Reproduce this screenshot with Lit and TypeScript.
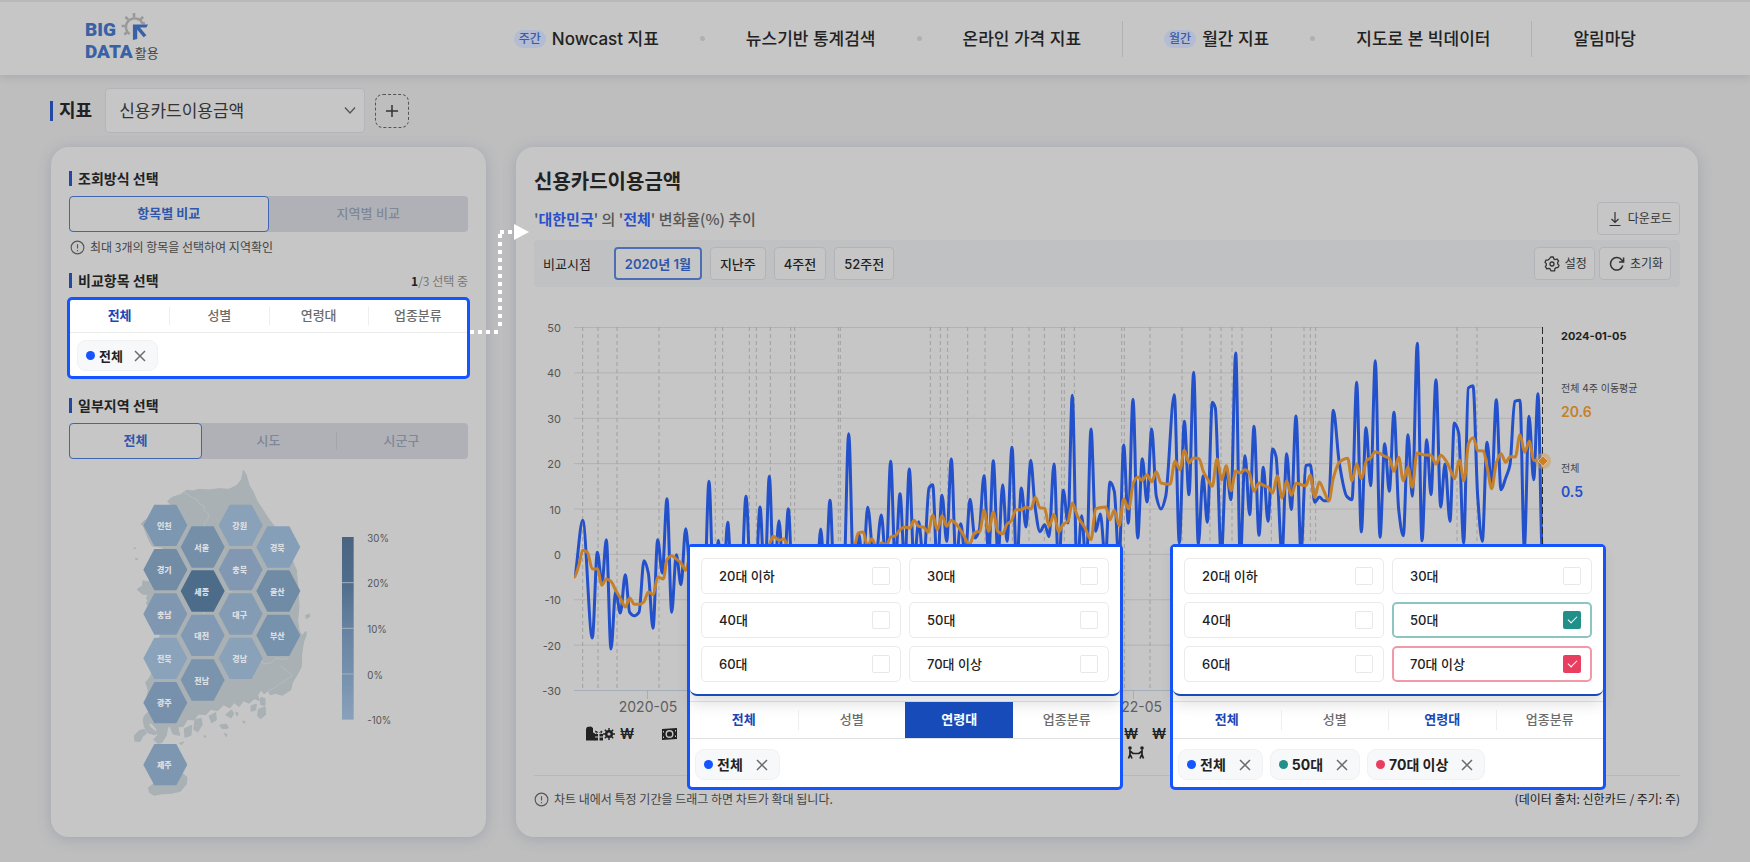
import { LitElement, html, svg, css, nothing } from "lit";
import { customElement, property, state } from "lit/decorators.js";
import { classMap } from "lit/directives/class-map.js";
import { styleMap } from "lit/directives/style-map.js";

type Point = [number, number];

const BLUE = "#1455ff";
const TEAL = "#219089";
const RED = "#e83e5f";

/* Series are stored at triple density: x from the plot's left edge, y from the +50 grid line. */
const at = (dx: number, flat: number[]): Point[] => {
  const out: Point[] = [];
  for (let i = 0; i < flat.length; i += 2) out.push([(flat[i] + dx) / 3, (flat[i + 1] - 52) / 3]);
  return out;
};

const WEEKLY: Point[] = [
  ...at(-132, [
    132, 800, 158, 632, 187, 985, 202, 728, 216, 822, 229, 690, 243, 1018, 257, 845, 271, 910, 286, 795, 299, 908,
    313, 918, 327, 908, 342, 753, 355, 790, 369, 956, 383, 690, 397, 790, 411, 567, 425, 908, 439, 735, 453, 825,
    467, 657, 481, 800, 509, 900, 523, 860, 537, 515, 551, 860, 565, 692, 579, 850, 593, 638, 607, 850, 632, 860,
    648, 560, 664, 850, 676, 840, 690, 592, 704, 830, 718, 500, 732, 820, 747, 633, 761, 820, 775, 597, 789, 850,
    858, 860, 872, 658, 886, 830, 900, 572, 914, 850, 940, 850, 956, 372, 972, 830, 987, 675, 999, 780, 1013, 593,
    1034, 780,
  ]),
  ...at(858, [
    64, 616, 78, 760, 92, 455, 106, 770, 120, 552, 134, 770, 148, 478, 162, 760, 176, 636, 191, 760, 207, 535,
    218, 525, 232, 780, 246, 557, 260, 695, 274, 448, 288, 760, 302, 642, 316, 740, 330, 569, 345, 685, 358, 660,
    372, 498, 386, 740, 400, 453, 414, 740, 428, 525, 441, 695, 456, 413, 470, 780, 484, 535, 498, 652, 512, 452,
    525, 590, 540, 666, 554, 645, 567, 681, 582, 463, 596, 780, 610, 542, 624, 640, 637, 257, 651, 780, 665, 618,
    679, 780, 693, 358, 707, 665, 721, 613, 736, 750, 750, 517, 763, 545, 777, 760, 791, 406, 805, 641, 819, 269,
    833, 685, 847, 447, 861, 577, 875, 358, 889, 560, 903, 598, 917, 560, 943, 255, 958, 700, 973, 335, 987, 555,
  ]),
  ...at(1848, [
    11, 188, 25, 705, 39, 498, 52, 638, 67, 278, 76, 295, 94, 740, 108, 470, 123, 570, 137, 130, 151, 750, 165, 438,
    179, 615, 192, 350, 207, 677, 220, 473, 234, 635, 248, 418, 258, 440, 276, 735, 290, 432, 304, 600, 318, 319,
    333, 730, 347, 468, 361, 465, 374, 578, 388, 562, 402, 573, 416, 573, 430, 302, 448, 460, 470, 560, 486, 570,
    500, 218, 514, 667, 528, 354, 542, 528, 556, 153, 570, 683, 584, 402, 598, 545, 612, 308, 626, 600, 640, 678,
    654, 375, 667, 560, 682, 101, 696, 693, 710, 390, 723, 555, 738, 210, 752, 592, 765, 463, 780, 635, 793, 340,
    806, 370, 821, 700, 835, 235, 849, 228, 863, 560, 877, 695, 891, 398, 905, 530, 919, 270, 933, 540, 947, 505,
    960, 465, 974, 275, 990, 272, 1003, 715, 1017, 320, 1031, 510, 1044, 252, 1057, 730,
  ]),
];

const AVERAGE: Point[] = [
  ...at(-132, [
    132, 803, 147, 765, 158, 722, 172, 728, 187, 778, 203, 778, 215, 827, 229, 808, 243, 815, 257, 842, 271, 865,
    286, 892, 299, 865, 313, 884, 330, 884, 342, 876, 355, 847, 370, 855, 383, 802, 400, 808, 411, 750, 425, 738,
    439, 748, 453, 760, 467, 782, 481, 740, 500, 760, 600, 770, 700, 740, 718, 705, 730, 680, 747, 692, 762, 688,
    775, 715, 860, 760, 960, 740, 975, 705, 985, 670,
  ]),
  ...at(858, [
    10, 667, 22, 710, 36, 687, 50, 715, 64, 700, 80, 705, 92, 682, 106, 678, 120, 660, 134, 652, 150, 655, 162, 632,
    176, 650, 190, 652, 205, 668, 218, 615, 232, 660, 246, 618, 260, 650, 274, 632, 290, 645, 310, 675, 328, 705,
    345, 668, 360, 665, 372, 602, 386, 665, 400, 607, 413, 665, 428, 672, 441, 643, 454, 634, 468, 600, 484, 601,
    498, 592, 513, 598, 526, 563, 540, 594, 554, 596, 567, 650, 582, 614, 596, 667, 610, 643, 624, 635, 637, 580,
    652, 618, 675, 655, 693, 690, 707, 597, 737, 592, 750, 630, 763, 602, 778, 648, 791, 568, 806, 598, 820, 520,
    833, 502, 847, 512, 861, 495, 875, 516, 889, 486, 903, 520, 930, 524, 945, 455, 960, 480, 973, 422, 987, 460,
  ]),
  ...at(1848, [
    10, 445, 27, 447, 40, 485, 55, 512, 67, 530, 81, 448, 95, 510, 109, 468, 123, 543, 137, 484, 150, 490, 165, 480,
    178, 490, 192, 545, 207, 520, 220, 527, 235, 533, 248, 550, 262, 498, 276, 565, 290, 514, 304, 557, 318, 521,
    347, 528, 361, 497, 374, 563, 388, 517, 402, 545, 417, 573, 430, 505, 448, 458, 473, 446, 486, 514, 500, 462,
    514, 507, 530, 452, 542, 445, 556, 426, 584, 440, 598, 446, 612, 485, 626, 443, 640, 513, 654, 472, 667, 533,
    681, 430, 700, 435, 723, 437, 738, 463, 752, 437, 766, 450, 780, 478, 794, 507, 808, 451, 822, 513, 836, 400,
    850, 384, 863, 423, 880, 424, 892, 475, 905, 537, 919, 460, 933, 432, 947, 458, 960, 441, 976, 442, 990, 375,
    1004, 428, 1018, 395, 1031, 452, 1057, 455,
  ]),
];

const EVENTS = [
  26, 72, 129, 255, 424, 446, 526, 547, 589, 650, 662, 793, 799, 1069, 1099, 1121, 1181, 1233, 1315, 1365, 1411, 1463,
  1471, 1501, 1643, 1651, 1728, 1824, 1908, 1941, 1974, 2004, 2092, 2190, 2209, 2225, 2649, 2709,
].map((x) => x / 3);

/* Monotone cubic interpolation, so peaks never overshoot their samples. */
const smooth = (pts: Point[]): string => {
  const slope = pts.map((p, i) => {
    if (i === 0 || i === pts.length - 1) return 0;
    const a = (p[1] - pts[i - 1][1]) / (p[0] - pts[i - 1][0]);
    const b = (pts[i + 1][1] - p[1]) / (pts[i + 1][0] - p[0]);
    return a * b <= 0 ? 0 : (2 * a * b) / (a + b);
  });
  let d = `M${pts[0][0].toFixed(1)} ${pts[0][1].toFixed(1)}`;
  for (let i = 1; i < pts.length; i++) {
    const [x0, y0] = pts[i - 1];
    const [x1, y1] = pts[i];
    const h = (x1 - x0) / 3;
    d += `C${[x0 + h, y0 + slope[i - 1] * h, x1 - h, y1 - slope[i] * h, x1, y1].map((v) => v.toFixed(1)).join(" ")}`;
  }
  return d;
};

const infoIcon = html`<svg class="info" viewBox="0 0 16 16" aria-hidden="true">
  <circle cx="8" cy="8" r="6.8" fill="none" stroke="#555" stroke-width="1.2" />
  <path d="M8 4.4v4.6M8 10.6v1.3" stroke="#555" stroke-width="1.2" />
</svg>`;

const TABS = ["전체", "성별", "연령대", "업종분류"];

interface Chip {
  name: string;
  color: string;
}

@customElement("item-tabs")
class ItemTabs extends LitElement {
  @property({ type: Array }) lit: string[] = [];
  @property() filled = "";

  static styles = css`
    :host { display: block; }
    .tabs { display: grid; grid-template-columns: repeat(4, 1fr); height: 100%; }
    .tab {
      position: relative; border: 0; padding: 0 0 2px; background: none; cursor: pointer;
      font: 500 13px/20px Inter, "Noto Sans CJK KR", sans-serif; color: #6c6c6c;
    }
    .tab + .tab { border-left: 1px solid transparent; border-image: linear-gradient(transparent 25%, #eee 25% 75%, transparent 75%) 1; }
    .tab.lit { color: #1c46b4; font-weight: 700; }
    .tab.filled { color: #fff; background: #174bb9; font-weight: 700; border-image: none; border-color: #174bb9; }
    .tab.filled + .tab { border-image: none; }
  `;

  render() {
    return html`<div class="tabs" role="tablist">
      ${TABS.map(
        (t) => html`<button
          role="tab"
          class=${classMap({ tab: true, lit: this.lit.includes(t), filled: this.filled === t })}
        >${t}</button>`
      )}
    </div>`;
  }
}

@customElement("chip-list")
class ChipList extends LitElement {
  @property({ type: Array }) chips: Chip[] = [];

  static styles = css`
    :host { display: flex; gap: 7px; }
    .chip {
      display: flex; align-items: center; box-sizing: border-box; height: 31px; padding: 0 11px 0 8px;
      border: 1px solid #f0f1f3; border-radius: 9px; background: #f7f8fa;
      font: 700 13px/20px Inter, "Noto Sans CJK KR", sans-serif; color: #222;
    }
    :host([large]) .chip { font-size: 14px; }
    .dot { width: 9px; height: 9px; margin-right: 4px; border-radius: 50%; }
    .remove { display: flex; margin-left: 11px; padding: 0; border: 0; background: none; cursor: pointer; }
    :host([large]) .remove { margin-left: 13px; }
    .remove svg { width: 12px; height: 12px; }
  `;

  render() {
    return this.chips.map(
      (c) => html`<div class="chip">
        <span class="dot" style=${styleMap({ background: c.color })}></span>${c.name}
        <button class="remove" aria-label="${c.name} 삭제">
          <svg viewBox="0 0 12 12"><path d="M1 1l10 10M11 1L1 11" stroke="#6c6c6c" stroke-width="1.5" /></svg>
        </button>
      </div>`
    );
  }
}

@customElement("age-popup")
class AgePopup extends LitElement {
  @property({ type: Object }) checked: Record<string, string> = {};
  @property({ type: Array }) lit: string[] = [];
  @property() filled = "";
  @property({ type: Array }) chips: Chip[] = [];

  static styles = css`
    :host {
      display: block; box-sizing: border-box; border: 3px solid #1455ff; border-radius: 5px; background: #fff;
      font-family: Inter, "Noto Sans CJK KR", sans-serif;
    }
    .panel {
      position: relative; display: grid; grid-template-columns: 1fr 1fr; gap: 8px; padding: 11px 11px 12px;
      border-bottom: 2px solid #174bb9; border-radius: 0 0 7px 7px; background: #fff;
      box-shadow: 0 8px 14px rgba(60, 60, 60, 0.16);
    }
    .option {
      display: flex; align-items: center; justify-content: space-between; box-sizing: border-box; height: 36px;
      padding: 0 10px 1px 17px; border: 1px solid #ebebeb; border-radius: 5px; font-size: 13px; line-height: 20px;
      font-weight: 500; color: #222; cursor: pointer;
    }
    .option.teal { border: 2px solid #8cc5c1; padding: 0 9px 1px 16px; }
    .option.red { border: 2px solid #f198a9; padding: 0 9px 1px 16px; }
    .box {
      appearance: none; box-sizing: border-box; width: 18px; height: 18px; margin: 0; border: 1px solid #e8e8e8;
      border-radius: 2px; background: #fff; display: grid; place-items: center;
    }
    .box:checked { border: 0; }
    .teal .box { background: #219089; }
    .red .box { background: #e83e5f; }
    .box:checked::before {
      content: ""; width: 9px; height: 5px; margin-bottom: 3px; border: solid #fff; border-width: 0 0 1px 1px;
      box-sizing: border-box; transform: rotate(-45deg);
    }
    .tabs { height: 36px; margin-top: 5px; border-top: 1px solid #e5e5e5; border-bottom: 1px solid #e2e2e2; }
    .chips { padding: 10px 5px 7px; }
  `;

  render() {
    return html`<div class="panel">
        ${["20대 이하", "30대", "40대", "50대", "60대", "70대 이상"].map((name) => {
          const tone = this.checked[name];
          return html`<label class=${classMap({ option: true, teal: tone === TEAL, red: tone === RED })}>
            ${name}<input class="box" type="checkbox" .checked=${Boolean(tone)} />
          </label>`;
        })}
      </div>
      <item-tabs class="tabs" .lit=${this.lit} .filled=${this.filled}></item-tabs>
      <chip-list large class="chips" .chips=${this.chips}></chip-list>`;
  }
}

@customElement("region-map")
class RegionMap extends LitElement {
  static styles = css`
    :host { display: block; }
    svg { display: block; width: 100%; }
    text { font-family: Inter, "Noto Sans CJK KR", sans-serif; }
    .name { font-size: 24px; font-weight: 900; fill: #dcdfe2; text-anchor: middle; }
    .scale { font-size: 29px; fill: #555; }
  `;

  private regions: [string, number, number, string][] = [
    ["인천", 169, 196, "#7d97b1"], ["경기", 169, 329, "#728ca6"], ["충남", 169, 462, "#8097b1"],
    ["전북", 169, 595, "#8aa2ba"], ["광주", 169, 728, "#7791ac"], ["제주", 169, 914, "#7d97b0"],
    ["서울", 281, 261, "#758fa8"], ["세종", 281, 393, "#4d6c8a"], ["대전", 281, 526, "#8199b2"],
    ["전남", 281, 660, "#7b94ae"], ["강원", 395, 196, "#89a1b9"], ["충북", 395, 329, "#8297b2"],
    ["대구", 395, 462, "#849bb4"], ["경남", 395, 595, "#89a2ba"], ["경북", 508, 261, "#869fb8"],
    ["울산", 508, 393, "#6f8ba6"], ["부산", 508, 526, "#7692ac"],
  ];

  render() {
    return html`<svg viewBox="0 0 960 1050" role="img" aria-label="지역별 변화율 지도">
      <defs>
        <linearGradient id="ramp" x2="0" y2="1">
          <stop offset="0" stop-color="#4a6381" /><stop offset=".25" stop-color="#4f6e8c" />
          <stop offset=".5" stop-color="#6782a0" /><stop offset=".75" stop-color="#7591ad" />
          <stop offset="1" stop-color="#8aa1bb" />
        </linearGradient>
      </defs>
      <g fill="#a9b1b5" stroke="#a9b1b5" stroke-width="3" stroke-linejoin="round">
        <path d="M403 31L412 45 420 75 432 95 445 125 462 150 480 178 497 200 520 240 545 290 562 330 568 400 570 440 566 480 570 510 578 528 590 514 592 524 584 545 578 580 577 620 564 645 550 668 545 690 520 706 500 700 484 704 476 692 466 702 456 690 446 706 452 722 436 716 420 730 404 722 390 740 376 728 362 744 344 734 326 752 306 748 290 764 268 762 256 780 236 778 222 800 206 800 212 826 192 822 184 800 176 800 172 826 158 848 146 850 134 838 146 826 142 806 128 790 112 790 104 770 122 752 112 720 118 690 110 668 124 650 134 625 120 600 130 560 150 535 160 510 140 480 128 450 112 430 124 405 100 402 84 388 100 378 102 362 118 366 130 350 150 330 170 280 160 262 130 258 118 236 104 200 98 190 110 180 150 150 186 134 176 124 190 112 214 104 234 90 250 93 270 88 300 90 330 86 360 88 384 76 398 58z" />
        <path d="M118 984l14-12 30-8 42-12 16-12 14 12-2 20-18 22-28 6-32 2-18 4-14-8z" />
        <path d="M76 828l14-16 16-4 6 12-12 10-6 14-16 0zM102 776l10 4 12 22 22 18-10 4-20-6-10-18zM590 466l12-4 0 8-10 6zM96 192l12-12 0 20zM78 296l8 0-2 4zM74 264l6 0 0 2zM120 402l-8 12 8 12zM226 806l22-10-2 30-18 6zM258 780l18-6 4 20-14 22-12-8zM300 768l20-10 2 22-14 8zM332 796l20-4 6 12-18 2zM350 764l18-14 6 12-8 12zM400 784l8 0-2 6zM380 756l8 4-4 8zM448 748l20-8 2 24-16 12-8-8zM426 738l16-6-2 18-14 4zM284 828l6 0 0 4zM212 850l12-4-6 8zM346 820l8 4-2 6zM456 712l12 4 0 20-14-2z" />
      </g>
      <path d="M224 96l18 12 24 12 6 12 12 6 2 14 14 12-4 16-10 8v20M452 604l16 8 20-4 12-14 22 4 16-4M516 618l20 16 14 12-20 16-20 10-14 12-20 10M282 460l6 0M350 394l20 2" fill="none" stroke="#b5bcc0" stroke-width="3" />
      ${this.regions.map(
        ([name, x, y, fill]) => svg`
          <path d="M${x - 66} ${y}l33-62h66l33 62-33 62h-66z" fill=${fill} />
          <text class="name" x=${x - 3} y=${y + 11}>${name}</text>`
      )}
      <rect x="699" y="231" width="35" height="548" fill="url(#ramp)" />
      ${["30%", "20%", "10%", "0%", "-10%"].map(
        (label, i) => svg`
          ${i > 0 && i < 4 ? svg`<path d="M699 ${231 + i * 137}h35" stroke="#a4b0bd" stroke-width="3" />` : nothing}
          <text class="scale" x="775" y=${245 + i * 137}>${label}</text>`
      )}
    </svg>`;
  }
}

@customElement("rate-chart")
class RateChart extends LitElement {
  static styles = css`
    :host { display: block; }
    svg { display: block; width: 100%; }
    text { font-family: Inter, "Noto Sans CJK KR", sans-serif; }
    .tick { font-size: 11px; fill: #555; text-anchor: end; }
    .date { font-size: 14px; fill: #5e5e5e; text-anchor: middle; }
    .won { font-size: 14px; font-weight: 600; fill: #222; text-anchor: middle; }
  `;

  render() {
    const rows = [50, 40, 30, 20, 10, 0, -10, -20, -30];
    const step = 363 / 8;
    return html`<svg viewBox="0 0 1027 460" role="img" aria-label="신용카드이용금액 변화율 추이">
      ${rows.map(
        (v, i) => svg`
          <path d="M40 ${12.5 + i * step}h968" stroke=${v === -30 ? "#a4adba" : "#b2b2b2"} />
          <text class="tick" x="27" y=${17 + i * step}>${v}</text>`
      )}
      <g transform="translate(40 12)">
        ${EVENTS.map((x) => svg`<path d="M${x} 0v363" stroke="#a0a0a0" stroke-dasharray="4 3" />`)}
        <path d=${smooth(WEEKLY)} fill="none" stroke="#2350cb" stroke-width="3" stroke-linejoin="round" />
        <path d=${smooth(AVERAGE)} fill="none" stroke="#c5802b" stroke-width="3" stroke-linejoin="round" />
        <path d="M968.5 0v363" stroke="#2a2a2a" stroke-dasharray="7 3" />
        <circle cx="969" cy="134" r="8" fill="#d09a50" opacity=".5" />
        <path d="M969 129l5 5-5 5-5-5z" fill="#c97f22" stroke="#dcc5a4" stroke-width=".8" />
      </g>
      <path d="M113.5 376v8M599.5 376v8" stroke="#a4adba" />
      <text class="date" x="114" y="397">2020-05</text>
      <text class="date" x="599" y="397">2022-05</text>
      <g fill="#222">
        <path d="M52 414l1-2 4-.5 2 1.5v4.500l2 1v7H52z" />
        <path d="M60.500 419h3.500v2.500h-3.500zM65.500 419H69v2.500h-3.500zM60.500 422.500h3.500v3h-3.500zM65.500 422.500H69v3h-3.500z" />
        <path d="M62.500 418.500l-1-2.500 2.500 1.500M67 418.500l1-2.500-2.500 1.500" fill="none" stroke="#222" />
        <circle cx="75" cy="419" r="4" />
        <path d="M75 413v12M69 419h12M70.800 414.800l8.400 8.400M79.200 414.800l-8.400 8.400" stroke="#222" stroke-width="1.400" />
        <circle cx="75" cy="419" r="1.600" fill="#c6c6c6" />
        <path d="M128 414l15-1v11l-15 1z" />
        <circle cx="135.5" cy="419" r="4" fill="#c6c6c6" /><circle cx="135.500" cy="419" r="2.600" />
        <path d="M129.5 416v1.500M141.500 415v1.500M129.500 421.500v1.500M141.500 420.500v1.500" stroke="#c6c6c6" />
        <circle cx="596" cy="433" r="1.8" /><circle cx="608" cy="433" r="1.8" />
        <path d="M596 434.5v5l-1.5 4M596 439l2 4.5M608 434.5v5l1.5 4M608 439l-2 4.5M596 436l3 2.500h6l3-2.5" fill="none" stroke="#222" stroke-width="1.7" />
      </g>
      <text class="won" x="93" y="424">₩</text>
      <text class="won" x="597" y="424">₩</text>
      <text class="won" x="625" y="424">₩</text>
    </svg>`;
  }
}

@customElement("app-root")
class AppRoot extends LitElement {
  @state() private selected: Chip[] = [{ name: "전체", color: BLUE }];

  static styles = css`
    :host {
      display: block; min-height: 100vh; box-sizing: border-box; background: #bebebf; color: #222;
      font-family: Inter, "Noto Sans CJK KR", sans-serif;
    }
    button, select { font-family: inherit; cursor: pointer; }
    a { color: inherit; text-decoration: none; }
    h1, h2, p { margin: 0; }

    .header {
      display: flex; align-items: center; justify-content: space-between; box-sizing: border-box; height: 75px;
      padding: 0 114px 0 85px; border-top: 2px solid #b9b9b9; background: #c6c6c6;
      box-shadow: 0 2px 8px rgba(90, 95, 105, 0.22);
    }
    .logo { display: grid; grid-template-columns: auto auto; justify-content: start; column-gap: 2px; padding-top: 4px; color: #3862a5; }
    .logo b { font: 900 19px/22px Roboto, sans-serif; }
    .logo svg { width: 28px; height: 28px; margin-top: -7px; margin-bottom: -2px; }
    .logo .first { display: flex; gap: 4px; grid-column: 1 / 3; height: 22px; }
    .logo small { align-self: end; font-size: 13px; line-height: 20px; color: #444; }
    .nav { display: flex; align-items: center; gap: 41px; font-size: 17px; line-height: 24px; font-weight: 500; }
    .link { display: flex; align-items: center; gap: 6px; }
    .badge { padding: 0 5px; border-radius: 9px; background: #b3bcd2; color: #3a5ba5; font-size: 12px; line-height: 18px; }
    .sep { width: 5px; height: 5px; border-radius: 50%; background: #aeb0b5; }
    .rule { width: 1px; height: 36px; background: #b1b1b1; }

    .picker { display: flex; align-items: center; padding: 13px 50px 14px; }
    .picker-label { padding-left: 6px; border-left: 3px solid #2148a3; font-size: 18px; line-height: 20px; font-weight: 700; }
    .select-wrap { display: flex; position: relative; margin: 0 10px 0 13px; }
    .select-wrap svg { position: absolute; right: 9px; top: 18px; width: 12px; height: 9px; pointer-events: none; }
    .select {
      appearance: none; width: 260px; height: 45px; padding: 0 30px 0 13px; border: 1px solid #b4b5bb;
      border-radius: 4px; background: #c6c6c6; color: #333; font-size: 17px;
    }
    .add {
      display: grid; place-items: center; width: 34px; height: 34px; padding: 0; border: 1px dashed #555;
      border-radius: 8px; background: none;
    }
    .add svg { width: 12px; height: 12px; }

    .cols { display: grid; grid-template-columns: 435px minmax(0, 1fr); gap: 30px; padding: 0 52px 25px 51px; }
    .card { position: relative; box-sizing: border-box; border-radius: 18px; background: #c6c6c6; box-shadow: 0 2px 14px rgba(100, 108, 130, 0.3); }

    .side { padding: 22px 18px 26px; }
    .heading { display: flex; justify-content: space-between; align-items: center; }
    .heading h2 {
      padding-left: 9px; font-size: 14px; line-height: 20px; font-weight: 700;
      background: linear-gradient(#2148a3, #2148a3) 0 2px / 3px 15px no-repeat;
    }
    .count { font: 12px/20px "Noto Sans CJK KR", sans-serif; color: #777; }
    .count b { color: #222; }
    .seg { display: flex; height: 36px; margin-top: 7px; border-radius: 4px; background: #b0b1b7; }
    .seg button {
      flex: 1; padding: 0 0 2px; border: 1px solid transparent; border-radius: 4px; background: none; color: #7e8896;
      font-size: 13px; line-height: 20px; font-weight: 500;
    }
    .seg .on { border-color: #3f66b2; background: #c6c6c6; color: #2f57ab; font-weight: 700; }
    .seg .divided { position: relative; }
    .seg .divided::before { content: ""; position: absolute; left: 0; top: 8px; bottom: 8px; width: 1px; background: #a3a5ab; }
    .note { display: flex; align-items: center; gap: 5px; font: 12px/20px "Noto Sans CJK KR", sans-serif; color: #444; }
    .side .note { margin: 5px 0 14px; padding-left: 1px; }
    .info { width: 15px; height: 15px; }
    .spot { position: relative; margin: 6px -2px 17px; border: 3px solid #1455ff; border-radius: 5px; background: #fff; }
    .spot-tabs { height: 32px; border-bottom: 1px solid #eaeaea; }
    .spot-chips { height: 29px; padding: 7px 7px; }
    .guide { position: absolute; left: calc(100% + 3px); top: -80px; width: 60px; height: 120px; z-index: 2; }
    .map { width: 320px; margin: 1px auto 0; }

    .main { padding: 20px 18px 27px; }
    .title { font-size: 20px; line-height: 30px; font-weight: 700; }
    .subrow { display: flex; align-items: center; justify-content: space-between; height: 33px; margin: 5px 0 5px; }
    .sub { font: 500 15px/22px "Noto Sans CJK KR", sans-serif; color: #555; }
    .sub b { color: #2a50c8; }
    .btn {
      display: flex; align-items: center; gap: 5px; box-sizing: border-box; height: 33px; padding: 0 7px 0 9px;
      border: 1px solid #b3b4ba; border-radius: 4px; background: #c6c6c6; color: #333; font-size: 12px; line-height: 20px;
    }
    .btn svg { width: 16px; height: 16px; }
    .bar { display: flex; align-items: center; gap: 8px; box-sizing: border-box; height: 47px; padding: 0 9px; border-radius: 4px; background: #bfc1c3; }
    .bar-label { margin-right: 15px; font-size: 13px; line-height: 20px; }
    .point {
      box-sizing: border-box; height: 33px; padding: 0 9px; border: 1px solid #b3b4ba; border-radius: 4px;
      background: #c6c6c6; color: #222; font-size: 13px; line-height: 20px; font-weight: 500;
    }
    .point.on { border: 2px solid #4a6fb4; color: #2f57ab; font-weight: 600; }
    .tools { display: flex; gap: 4px; margin-left: auto; }
    .chart { display: grid; grid-template-columns: minmax(0, 1fr) 119px; margin-top: 28px; }
    .readout { padding-top: 12px; font-size: 10px; line-height: 16px; color: #444; }
    .readout .day { font-size: 11px; line-height: 18px; font-weight: 700; color: #222; margin-bottom: 35px; }
    .value { margin: 6px 0 38px; font-size: 14px; line-height: 20px; font-weight: 600; }
    .avg { color: #c5802b; }
    .all { color: #2350cb; }
    .foot { display: flex; align-items: center; justify-content: space-between; padding-top: 12px; border-top: 1px solid #b8b8b8; }
    .foot p { font: 12px/22px "Noto Sans CJK KR", sans-serif; }
    .popup { position: absolute; top: 397px; width: 436px; }
    .popup.before { left: 171px; }
    .popup.after { left: 654px; }
  `;

  render() {
    const sep = html`<span class="sep"></span>`;
    const rule = html`<span class="rule"></span>`;
    const link = (text: string, badge = "") =>
      html`<a class="link" href="#">${badge ? html`<span class="badge">${badge}</span>` : nothing}${text}</a>`;
    return html`
      <header class="header">
        <a class="logo" href="#">
          <span class="first"><b>BIG</b>
            <svg viewBox="0 0 26 26" aria-hidden="true">
              <path d="M9 20.5A8 8 0 1 1 21 11" fill="none" stroke="#999" stroke-width="2.2" />
              <path d="M13 1v4M5 4.5l2.5 2.5M1.5 13H5M4 21l3-2.5M21.5 4.5L19 7M23 10l-2 1" stroke="#999" stroke-width="2.4" />
              <path d="M12 11.500h14l-1.500 3h-6l6 7-2.500 2-6-7V25l-4 1z" fill="#3862a5" />
            </svg>
          </span>
          <b>DATA</b><small>활용</small>
        </a>
        <nav class="nav">
          ${link("Nowcast 지표", "주간")}${sep}${link("뉴스기반 통계검색")}${sep}${link("온라인 가격 지표")}${rule}
          ${link("월간 지표", "월간")}${sep}${link("지도로 본 빅데이터")}${rule}${link("알림마당")}
        </nav>
      </header>

      <div class="picker">
        <label class="picker-label" for="indicator">지표</label>
        <span class="select-wrap">
          <select class="select" id="indicator"><option>신용카드이용금액</option></select>
          <svg viewBox="0 0 12 9" aria-hidden="true"><path d="M1 1.5l5 5.5 5-5.5" fill="none" stroke="#555" stroke-width="1.3" /></svg>
        </span>
        <button class="add" aria-label="지표 추가">
          <svg viewBox="0 0 12 12"><path d="M6 0v12M0 6h12" stroke="#333" stroke-width="1.5" /></svg>
        </button>
      </div>

      <main class="cols">
        <section class="card side">
          <div class="heading"><h2>조회방식 선택</h2></div>
          <div class="seg"><button class="on">항목별 비교</button><button>지역별 비교</button></div>
          <p class="note">${infoIcon}최대 3개의 항목을 선택하여 지역확인</p>
          <div class="heading"><h2>비교항목 선택</h2><span class="count"><b>1</b>/3 선택 중</span></div>
          <div class="spot">
            <item-tabs class="spot-tabs" .lit=${["전체"]}></item-tabs>
            <chip-list class="spot-chips" .chips=${this.selected}></chip-list>
            <svg class="guide" viewBox="0 0 60 120" aria-hidden="true">
              <path d="M0 112h32M30 106V10M30 12h16" fill="none" stroke="#fff" stroke-width="4" stroke-dasharray="4 4" />
              <path d="M44 4l15 8-15 8z" fill="#fff" />
            </svg>
          </div>
          <div class="heading"><h2>일부지역 선택</h2></div>
          <div class="seg"><button class="on">전체</button><button>시도</button><button class="divided">시군구</button></div>
          <region-map class="map"></region-map>
        </section>

        <section class="card main">
          <h1 class="title">신용카드이용금액</h1>
          <div class="subrow">
            <p class="sub">'<b>대한민국</b>' 의 '<b>전체</b>' 변화율(%) 추이</p>
            <button class="btn">
              <svg viewBox="0 0 16 16"><path d="M8 1v10M4.5 8L8 11.5 11.5 8M2.5 14.5h11" fill="none" stroke="#333" stroke-width="1.2" /></svg>
              다운로드
            </button>
          </div>
          <div class="bar">
            <span class="bar-label">비교시점</span>
            <button class="point on">2020년 1월</button>
            <button class="point">지난주</button>
            <button class="point">4주전</button>
            <button class="point">52주전</button>
            <div class="tools">
              <button class="btn">
                <svg viewBox="0 0 16 16" fill="none" stroke="#333" stroke-width="1.3">
                  <path d="M6.7 1h2.6l.5 1.9 1.3.7 1.9-.6 1.6 2-1 1.7.2 1.4 1.2 1.3-1 2.2-2 .1-1.1 1-.3 2.1H6.9l-.8-1.9-1.3-.6-2 .5-1.4-2.1 1-1.7-.1-1.4L1 6.3l1-2.2 2-.1 1.3-1z" stroke-linejoin="round" />
                  <circle cx="8" cy="8" r="2" />
                </svg>
                설정
              </button>
              <button class="btn">
                <svg viewBox="0 0 16 16" fill="none" stroke="#333" stroke-width="1.5"><path d="M13.8 9.5A6.3 6.3 0 1 1 12.8 4l1.5 1.7M14.6 1.5v4.5h-4.5" /></svg>
                초기화
              </button>
            </div>
          </div>
          <div class="chart">
            <rate-chart></rate-chart>
            <div class="readout">
              <div class="day">2024-01-05</div>
              <div>전체 4주 이동평균</div>
              <div class="value avg">20.6</div>
              <div>전체</div>
              <div class="value all">0.5</div>
            </div>
          </div>
          <div class="foot">
            <p class="note">${infoIcon}차트 내에서 특정 기간을 드래그 하면 차트가 확대 됩니다.</p>
            <p>(데이터 출처: 신한카드 / 주기: 주)</p>
          </div>
          <age-popup class="popup before" .lit=${["전체"]} filled="연령대" .chips=${this.selected}></age-popup>
          <age-popup
            class="popup after"
            .checked=${{ "50대": TEAL, "70대 이상": RED }}
            .lit=${["전체", "연령대"]}
            .chips=${[...this.selected, { name: "50대", color: TEAL }, { name: "70대 이상", color: RED }]}
          ></age-popup>
        </section>
      </main>
    `;
  }
}
